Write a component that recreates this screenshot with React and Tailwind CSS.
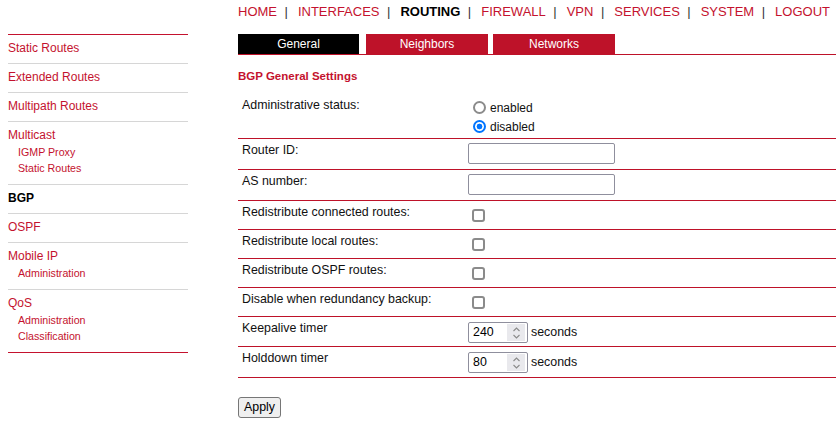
import { useState } from 'react';

const NAV = ['HOME', 'INTERFACES', 'ROUTING', 'FIREWALL', 'VPN', 'SERVICES', 'SYSTEM', 'LOGOUT'];

const SIDE = [
  { label: 'Static Routes' },
  { label: 'Extended Routes' },
  { label: 'Multipath Routes' },
  { label: 'Multicast', subs: ['IGMP Proxy', 'Static Routes'] },
  { label: 'BGP', active: true },
  { label: 'OSPF' },
  { label: 'Mobile IP', subs: ['Administration'] },
  { label: 'QoS', subs: ['Administration', 'Classification'] },
];

function Sidebar() {
  return (
    <div className="ml-[8px] mt-[34px] w-[180px] shrink-0 border-t border-[#c4122e]">
      {SIDE.map((item, i) => (
        <div
          key={i}
          className={
            'pt-[6px] border-b ' +
            (item.subs ? 'pb-[8px] ' : 'pb-[7px] ') +
            (i === SIDE.length - 1 ? 'border-[#c4122e]' : 'border-[#d6d6d6]')
          }
        >
          <div
            className={
              'text-[12px] leading-[15px] ' +
              (item.active ? 'font-bold text-black' : 'text-[#c4122e]')
            }
          >
            {item.label}
          </div>
          {item.subs && (
            <div className="mt-[1px]">
              {item.subs.map((s, j) => (
                <div key={j} className="pl-[10px] text-[10.67px] leading-[16px] text-[#c4122e]">
                  {s}
                </div>
              ))}
            </div>
          )}
        </div>
      ))}
    </div>
  );
}

function TopNav() {
  return (
    <div className="h-[34px] pt-[4px] text-[13px] leading-[15px] flex whitespace-nowrap">
      {NAV.map((n, i) => (
        <span key={n} className="flex">
          <span className={n === 'ROUTING' ? 'font-bold text-black' : 'text-[#c4122e]'}>{n}</span>
          {i < NAV.length - 1 && <span className="ml-[7.5px] mr-[10px] text-[#333]">|</span>}
        </span>
      ))}
    </div>
  );
}

function Tabs() {
  return (
    <div className="flex border-b border-[#be1229] text-[12px] text-white">
      <div className="w-[121px] h-[20px] bg-black flex items-center justify-center">General</div>
      <div className="ml-[7px] w-[122px] h-[20px] bg-[#be1229] flex items-center justify-center">Neighbors</div>
      <div className="ml-[5px] w-[122px] h-[20px] bg-[#be1229] flex items-center justify-center">Networks</div>
    </div>
  );
}

function Row({ h, label, children }) {
  return (
    <div className={'flex border-b border-[#be1229] ' + h}>
      <div className="w-[230px] shrink-0 pl-[4px] pt-[4px] text-[12.4px] leading-[15px] text-[#111]">{label}</div>
      <div className="flex-1">{children}</div>
    </div>
  );
}

function Check() {
  return (
    <input
      type="checkbox"
      className="appearance-none ml-[4px] mt-[8px] w-[13px] h-[13px] block border-2 border-[#8b8b8b] rounded-[3px] bg-white"
    />
  );
}

function TextBox() {
  return (
    <input
      type="text"
      className="mt-[4px] block w-[147px] h-[21px] border border-[#8f8f9d] rounded-[2px] bg-white px-[3px] text-[12px]"
    />
  );
}

function Spin({ value }) {
  return (
    <div className="mt-[5px] flex items-center">
      <div className="w-[60px] h-[21px] border border-[#8f8f9d] rounded-[2px] bg-white flex items-stretch p-[1px]">
        <span className="flex-1 pl-[3px] text-[12.4px] leading-[17px] text-black">{value}</span>
        <span className="w-[18px] mr-[1px] bg-[#e9e9ed] flex flex-col items-center justify-center">
          <svg width="9" height="14" viewBox="0 0 9 14" fill="none" stroke="#8a8a8a" strokeWidth="1.1">
            <path d="M1.5 5 L4.5 2 L7.5 5" />
            <path d="M1.5 9 L4.5 12 L7.5 9" />
          </svg>
        </span>
      </div>
      <span className="ml-[3px] text-[12.4px] text-[#111]">seconds</span>
    </div>
  );
}

export default function App() {
  const [status, setStatus] = useState('disabled');
  return (
    <div className="w-[836px] h-[430px] bg-white flex font-['Liberation_Sans',Arial,sans-serif] overflow-hidden">
      <Sidebar />
      <div className="ml-[50px] flex-1">
        <TopNav />
        <Tabs />
        <div className="mt-[14px] text-[11.5px] leading-[15px] font-bold text-[#c4122e]">BGP General Settings</div>
        <div className="mt-[10px]">
          <Row h="h-[45px]" label="Administrative status:">
            <div className="pt-[4px] text-[12px]">
              {['enabled', 'disabled'].map((v) => (
                <label key={v} className="h-[19px] flex items-center text-[#111]">
                  <input
                    type="radio"
                    name="status"
                    checked={status === v}
                    onChange={() => setStatus(v)}
                    className="appearance-none ml-[5px] mr-[4px] w-[13px] h-[13px] rounded-full border-2 border-[#8b8b8b] bg-white checked:border-[#0075ff] checked:bg-[radial-gradient(circle,#0075ff_0_2.6px,#fff_3.2px)]"
                  />
                  {v}
                </label>
              ))}
            </div>
          </Row>
          <Row h="h-[31px]" label="Router ID:">
            <TextBox />
          </Row>
          <Row h="h-[31px]" label="AS number:">
            <TextBox />
          </Row>
          <Row h="h-[29px]" label="Redistribute connected routes:">
            <Check />
          </Row>
          <Row h="h-[29px]" label="Redistribute local routes:">
            <Check />
          </Row>
          <Row h="h-[29px]" label="Redistribute OSPF routes:">
            <Check />
          </Row>
          <Row h="h-[29px]" label="Disable when redundancy backup:">
            <Check />
          </Row>
          <Row h="h-[30px]" label="Keepalive timer">
            <Spin value="240" />
          </Row>
          <Row h="h-[31px]" label="Holddown timer">
            <Spin value="80" />
          </Row>
        </div>
        <button className="mt-[19px] h-[21px] px-[5px] border border-[#767676] rounded-[3px] bg-[#efefef] text-[12.4px] leading-[15px] text-black">
          Apply
        </button>
      </div>
    </div>
  );
}
